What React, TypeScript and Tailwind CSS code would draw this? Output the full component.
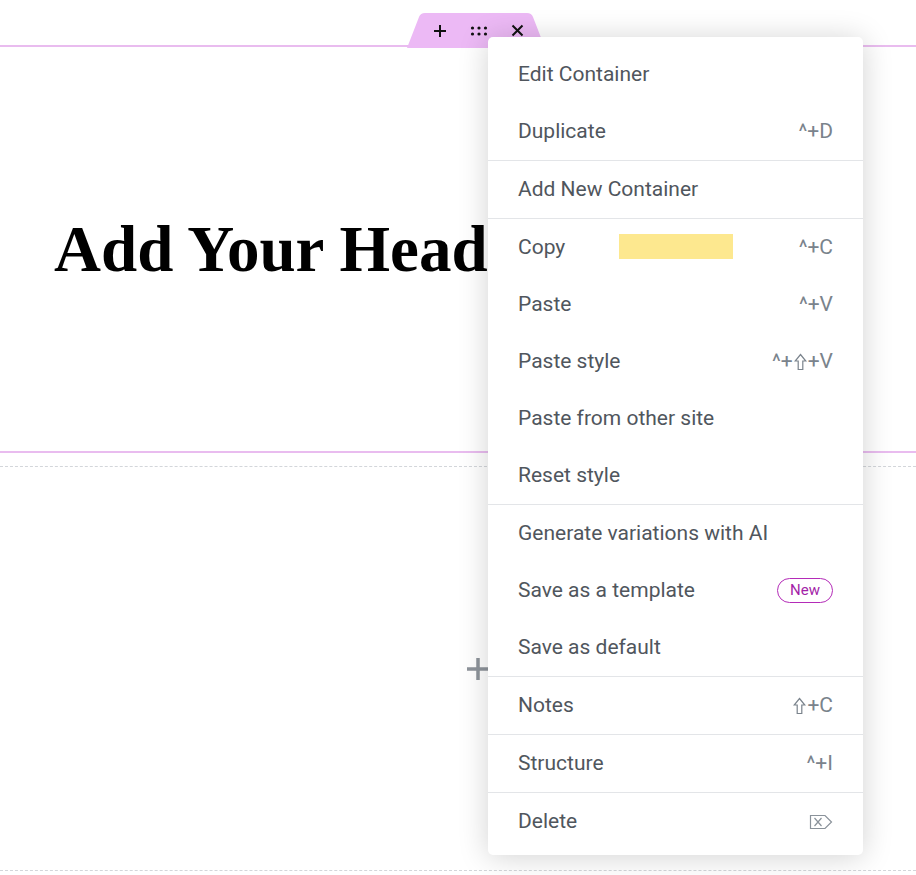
import React from "react";

type Item = { label: string; shortcut?: React.ReactNode; badge?: boolean; mark?: boolean };

const Shift = () => (
  <svg width="13" height="18" viewBox="0 0 13 18" fill="none" stroke="#7a838c" strokeWidth="1.2" className="mx-[1px]">
    <path d="M6.5 1.5L11.8 8H8.8V16.5H4.2V8H1.2Z" />
  </svg>
);

const GROUPS: Item[][] = [
  [{ label: "Edit Container" }, { label: "Duplicate", shortcut: "^+D" }],
  [{ label: "Add New Container" }],
  [
    { label: "Copy", shortcut: "^+C", mark: true },
    { label: "Paste", shortcut: "^+V" },
    { label: "Paste style", shortcut: <>^+<Shift />+V</> },
    { label: "Paste from other site" },
    { label: "Reset style" },
  ],
  [
    { label: "Generate variations with AI" },
    { label: "Save as a template", badge: true },
    { label: "Save as default" },
  ],
  [{ label: "Notes", shortcut: <><Shift />+C</> }],
  [{ label: "Structure", shortcut: "^+I" }],
  [{ label: "Delete", shortcut: "del" }],
];

function DeleteKey() {
  return (
    <svg width="24" height="16" viewBox="0 0 24 16" fill="none" stroke="#8a929a" strokeWidth="1.2">
      <path d="M1.5 1.5H16L22.5 8L16 14.5H1.5Z" />
      <path d="M5.5 4L12.5 12M12.5 4L5.5 12" />
    </svg>
  );
}

function MenuRow({ item }: { item: Item }) {
  return (
    <div className="relative flex items-center justify-between h-[57px] px-[30px] text-[21px] text-[#50565d]">
      <span>{item.label}</span>
      {item.mark && <div className="absolute left-[131px] top-[15px] w-[114px] h-[25px] bg-[#fde88f]" />}
      {item.badge && (
        <span className="flex items-center justify-center w-[56px] h-[25px] rounded-full border border-[#b42bb8] text-[15px] text-[#a31fa8]">
          New
        </span>
      )}
      {item.shortcut === "del" ? (
        <DeleteKey />
      ) : (
        item.shortcut && <span className="flex items-center text-[#7a838c]">{item.shortcut}</span>
      )}
    </div>
  );
}

function Tab() {
  return (
    <div className="absolute left-[407px] top-[-34px] w-[138px] h-[35px]">
      <svg className="absolute inset-0" width="138" height="35" viewBox="0 0 138 35">
        <path d="M0 35L12 4Q13.5 0 18 0H120Q124.5 0 126 4L138 35Z" fill="#ecb9f5" />
      </svg>
      <div className="relative flex items-center h-full pl-[26px] gap-[23px] text-black">
        <svg width="14" height="14" viewBox="0 0 14 14" stroke="#111" strokeWidth="2">
          <path d="M7 1V13M1 7H13" />
        </svg>
        <svg width="18" height="10" viewBox="0 0 18 10" fill="#111">
          <circle cx="2.5" cy="2" r="1.6" />
          <circle cx="9" cy="2" r="1.6" />
          <circle cx="15.5" cy="2" r="1.6" />
          <circle cx="2.5" cy="8" r="1.6" />
          <circle cx="9" cy="8" r="1.6" />
          <circle cx="15.5" cy="8" r="1.6" />
        </svg>
        <svg width="13" height="13" viewBox="0 0 13 13" stroke="#111" strokeWidth="2">
          <path d="M1.5 1.5L11.5 11.5M11.5 1.5L1.5 11.5" />
        </svg>
      </div>
    </div>
  );
}

export default function App() {
  return (
    <div className="relative w-[916px] h-[875px] bg-white overflow-hidden font-['Roboto',sans-serif]">
      <section className="relative mt-[45px] h-[408px] border-y-2 border-[#e9bcef] flex items-center justify-center">
        <Tab />
        <h1 className="font-['Liberation_Serif',serif] font-bold text-[65px] leading-none text-black whitespace-nowrap">
          Add Your Heading Text Here
        </h1>
      </section>

      <div className="mt-[13px] h-[405px] border-y border-dashed border-[#d3d6da] flex items-center justify-center pl-[40px]">
        <svg width="22" height="22" viewBox="0 0 22 22" stroke="#8e949b" strokeWidth="3.5">
          <path d="M11 0V22M0 11H22" />
        </svg>
      </div>

      <div className="absolute left-[488px] top-[37px] w-[375px] bg-white rounded-[5px] shadow-[0_2px_30px_rgba(0,0,0,0.18)] pt-[9px] pb-[5px]">
        {GROUPS.map((group, gi) => (
          <div key={gi} className={gi > 0 ? "border-t border-[#e3e5e8]" : ""}>
            {group.map((item) => (
              <MenuRow key={item.label} item={item} />
            ))}
          </div>
        ))}
      </div>
    </div>
  );
}
